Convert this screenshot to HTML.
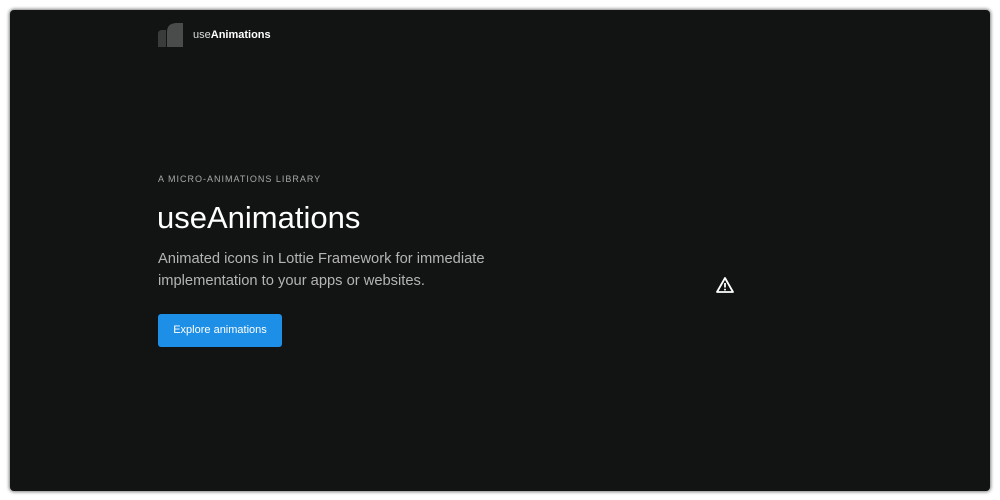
<!DOCTYPE html>
<html><head><style>
html,body{margin:0;padding:0;width:1000px;height:500px;background:#fff;overflow:hidden;font-family:"Liberation Sans",sans-serif}
.panel{position:absolute;left:10px;top:10px;width:980px;height:481px;background:#121313;border-radius:4px;box-shadow:0 0 3px 1px rgba(0,0,0,.5)}
.abs{position:absolute;white-space:nowrap}
</style></head><body>
<div class="panel"></div>
<svg class="abs" style="left:157px;top:22px" width="28" height="26" viewBox="0 0 28 26">
<path d="M1 12 Q1 8 5 8 L9 8 L9 25 L1 25 Z" fill="#3a3b3b"/>
<path d="M10 10 Q10 1 20 1 L26 1 L26 25 L10 25 Z" fill="#4a4b4b"/>
</svg>
<div class="abs" style="left:193px;top:29px;font-size:11px;color:#ddd">use<b style="color:#fff">Animations</b></div>
<div class="abs" style="left:158px;top:174px;font-size:9px;letter-spacing:1px;color:#a8a8a8">A MICRO-ANIMATIONS LIBRARY</div>
<div class="abs" style="left:157px;top:200px;font-size:31px;color:#fff">useAnimations</div>
<div class="abs" style="left:158px;top:248px;font-size:14.7px;line-height:22px;color:#b4b4b4">Animated icons in Lottie Framework for immediate<br>implementation to your apps or websites.</div>
<div class="abs" style="left:158px;top:314px;width:124px;height:33px;background:#1e8fe6;border-radius:3px;color:#fff;font-size:11px;line-height:33px;text-align:center">Explore animations</div>
<svg class="abs" style="left:715px;top:276px" width="20" height="18" viewBox="0 0 20 18">
<path d="M10 2 L18 16 L2 16 Z" fill="none" stroke="#fff" stroke-width="1.8" stroke-linejoin="round"/>
<path d="M10 7 V11.5" stroke="#fff" stroke-width="1.8"/>
<circle cx="10" cy="13.6" r="1" fill="#fff"/>
</svg>
</body></html>
